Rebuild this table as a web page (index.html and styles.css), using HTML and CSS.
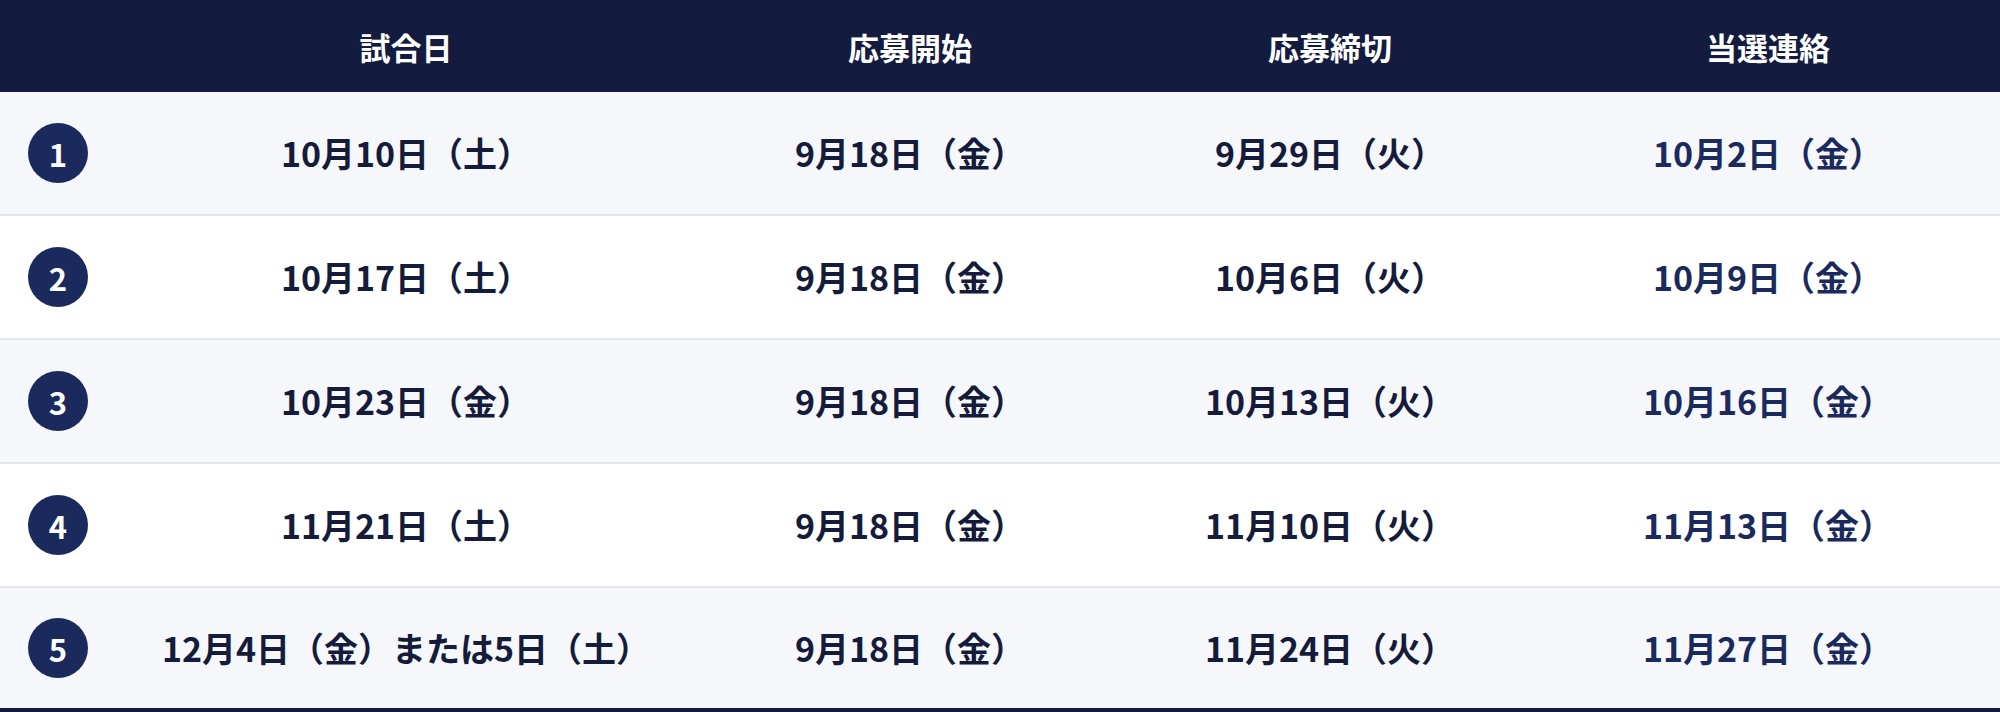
FILE: index.html
```html
<!DOCTYPE html>
<html lang="ja">
<head>
<meta charset="utf-8">
<title>日程</title>
<link rel="stylesheet" href="styles.css">
</head>
<body>
<div class="schedule" role="table">
  <div class="row head" role="row">
    <div class="cell" role="columnheader"></div>
    <div class="cell" role="columnheader">試合日</div>
    <div class="cell" role="columnheader">応募開始</div>
    <div class="cell" role="columnheader">応募締切</div>
    <div class="cell" role="columnheader">当選連絡</div>
  </div>
  <div class="row body alt" role="row">
    <div class="cell"><span class="num">1</span></div>
    <div class="cell">10月10日（土）</div>
    <div class="cell">9月18日（金）</div>
    <div class="cell">9月29日（火）</div>
    <div class="cell notice">10月2日（金）</div>
  </div>
  <div class="row body" role="row">
    <div class="cell"><span class="num">2</span></div>
    <div class="cell">10月17日（土）</div>
    <div class="cell">9月18日（金）</div>
    <div class="cell">10月6日（火）</div>
    <div class="cell notice">10月9日（金）</div>
  </div>
  <div class="row body alt" role="row">
    <div class="cell"><span class="num">3</span></div>
    <div class="cell">10月23日（金）</div>
    <div class="cell">9月18日（金）</div>
    <div class="cell">10月13日（火）</div>
    <div class="cell notice">10月16日（金）</div>
  </div>
  <div class="row body" role="row">
    <div class="cell"><span class="num">4</span></div>
    <div class="cell">11月21日（土）</div>
    <div class="cell">9月18日（金）</div>
    <div class="cell">11月10日（火）</div>
    <div class="cell notice">11月13日（金）</div>
  </div>
  <div class="row body alt last" role="row">
    <div class="cell"><span class="num">5</span></div>
    <div class="cell">12月4日（金）または5日（土）</div>
    <div class="cell">9月18日（金）</div>
    <div class="cell">11月24日（火）</div>
    <div class="cell notice">11月27日（金）</div>
  </div>
</div>
</body>
</html>
```
FILE: styles.css
```css
html, body {
  margin: 0;
  padding: 0;
  background: #ffffff;
}
body {
  font-family: "Noto Sans CJK JP", "Noto Sans", sans-serif;
  font-weight: 700;
  color: #151b3a;
}
.schedule {
  width: 2000px;
  display: flex;
  flex-direction: column;
}
.row {
  display: grid;
  grid-template-columns: 116px 580px 428px 412px 464px;
  align-items: center;
}
.cell {
  display: flex;
  align-items: center;
  justify-content: center;
  white-space: nowrap;
  line-height: 1;
}
.head {
  background: #131b3f;
  height: 92px;
}
.head .cell {
  color: #ffffff;
  font-size: 31px;
}
.body {
  height: 122px;
  border-bottom: 2px solid #e2e5ee;
  background: #ffffff;
}
.body.alt { background: #f6f7fb; }
.body.last {
  height: 120px;
  border-bottom: 4px solid #131b3f;
}
.body .cell {
  font-size: 34px;
  color: #151b3a;
}
.body .cell.notice { color: #1b2a5c; }
.num {
  display: flex;
  align-items: center;
  justify-content: center;
  width: 60px;
  height: 60px;
  border-radius: 50%;
  background: #1b2a5c;
  color: #ffffff;
  font-size: 31px;
  line-height: 1;
}
```
